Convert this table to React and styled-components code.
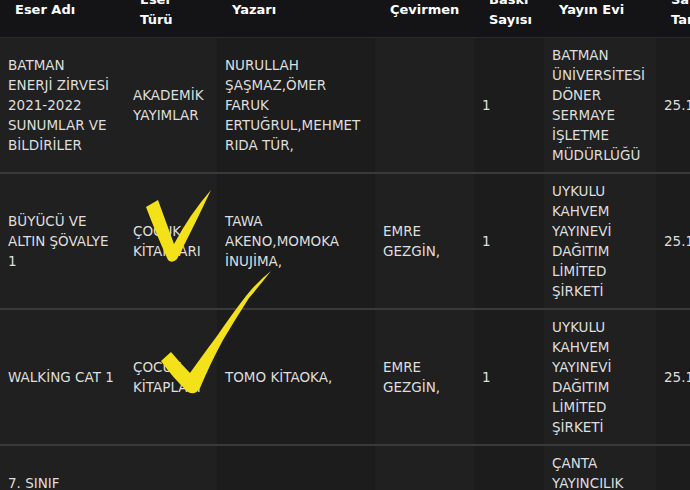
import styled, { createGlobalStyle } from "styled-components";

const GlobalStyle = createGlobalStyle`
  html, body {
    margin: 0;
    padding: 0;
    background: #1f1f1f;
    overflow: hidden;
  }
`;

const columns = [
  { key: "ad", title: "Eser Adı", width: 125 },
  { key: "tur", title: "Eser\nTürü", width: 92 },
  { key: "yazar", title: "Yazarı", width: 158, dark: true },
  { key: "cevirmen", title: "Çevirmen", width: 99 },
  { key: "baski", title: "Baskı\nSayısı", width: 70, dark: true },
  { key: "yayin", title: "Yayın Evi", width: 112 },
  { key: "tarih", title: "Satış\nTarihi", width: 120, dark: true },
];

const rows = [
  {
    ad: "BATMAN\nENERJİ ZİRVESİ\n2021-2022\nSUNUMLAR VE\nBİLDİRİLER",
    tur: "AKADEMİK\nYAYIMLAR",
    yazar: "NURULLAH\nŞAŞMAZ,ÖMER\nFARUK\nERTUĞRUL,MEHMET\nRIDA TÜR,",
    cevirmen: "",
    baski: "1",
    yayin: "BATMAN\nÜNİVERSİTESİ\nDÖNER\nSERMAYE\nİŞLETME\nMÜDÜRLÜĞÜ",
    tarih: "25.10.2023",
  },
  {
    ad: "BÜYÜCÜ VE\nALTIN ŞÖVALYE\n1",
    tur: "ÇOCUK\nKİTAPLARI",
    yazar: "TAWA\nAKENO,MOMOKA\nİNUJİMA,",
    cevirmen: "EMRE\nGEZGİN,",
    baski: "1",
    yayin: "UYKULU\nKAHVEM\nYAYINEVİ\nDAĞITIM\nLİMİTED\nŞİRKETİ",
    tarih: "25.10.2023",
  },
  {
    ad: "WALKİNG CAT 1",
    tur: "ÇOCUK\nKİTAPLARI",
    yazar: "TOMO KİTAOKA,",
    cevirmen: "EMRE\nGEZGİN,",
    baski: "1",
    yayin: "UYKULU\nKAHVEM\nYAYINEVİ\nDAĞITIM\nLİMİTED\nŞİRKETİ",
    tarih: "25.10.2023",
  },
  {
    ad: "7. SINIF\nMATEMATİK\nSORU\nBANKASI",
    tur: "EĞİTİM\nKİTAPLARI",
    yazar: "KOMİSYON,",
    cevirmen: "",
    baski: "1",
    yayin: "ÇANTA\nYAYINCILIK\nDAĞITIM\nSANAYİ VE\nTİCARET\nLİMİTED",
    tarih: "25.10.2023",
  },
];

const Page = styled.div`
  position: relative;
  width: 690px;
  height: 490px;
  overflow: hidden;
  background: #1f1f1f;
`;

const Table = styled.table`
  width: 776px;
  margin-top: -17px;
  table-layout: fixed;
  border-collapse: collapse;
  font-family: "DejaVu Sans", "Liberation Sans", sans-serif;
`;

const HeadCell = styled.th`
  background: #141417;
  color: #ffffff;
  font-size: 13px;
  font-weight: 700;
  line-height: 20px;
  text-align: left;
  vertical-align: middle;
  white-space: pre;
  padding: 7px 8px 7px 15px;
  border-bottom: 1px solid #2b2b2e;
`;

const Cell = styled.td`
  background: ${(p) => (p.$dark ? "#1c1c1c" : "#202020")};
  color: #dedede;
  font-size: 13.5px;
  line-height: 20px;
  vertical-align: middle;
  white-space: pre;
  padding: 7px 8px;
  border-bottom: 2px solid #3a3a3a;
`;

const Marks = styled.svg`
  position: absolute;
  top: 0;
  left: 0;
  pointer-events: none;
`;

function CheckMarks() {
  return (
    <Marks width="690" height="490" viewBox="0 0 690 490">
      <path
        fill="#f3e219"
        d="M146,207 L158,200 Q166,222 174,244 Q190,214 211,190 Q196,222 177,259 Q172,264 168,260 Q157,236 146,207 Z"
      />
      <path
        fill="#f3e219"
        d="M161,361 L171,352 Q181,364 190,373 Q205,352 217,336 Q232,314 246,296 Q258,281 271,271 Q260,285 249,298 Q236,318 223,340 Q211,362 200,388 Q195,396 188,392 Q173,378 161,361 Z"
      />
    </Marks>
  );
}

export default function App() {
  return (
    <Page>
      <GlobalStyle />
      <Table>
        <colgroup>
          {columns.map((c) => (
            <col key={c.key} style={{ width: c.width }} />
          ))}
        </colgroup>
        <thead>
          <tr>
            {columns.map((c) => (
              <HeadCell key={c.key}>{c.title}</HeadCell>
            ))}
          </tr>
        </thead>
        <tbody>
          {rows.map((r, i) => (
            <tr key={i}>
              {columns.map((c) => (
                <Cell key={c.key} $dark={c.dark}>
                  {r[c.key]}
                </Cell>
              ))}
            </tr>
          ))}
        </tbody>
      </Table>
      <CheckMarks />
    </Page>
  );
}
